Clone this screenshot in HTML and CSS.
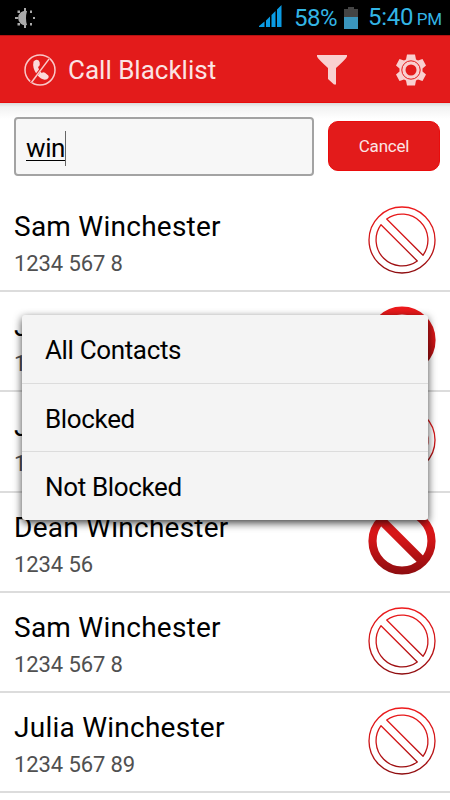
FILE: index.html
```html
<!DOCTYPE html>
<html lang="en">
<head>
  <meta charset="UTF-8" />
  <meta name="viewport" content="width=device-width, initial-scale=1.0" />
  <title>Call Blacklist</title>
  <link rel="stylesheet" href="styles.css">
</head>
<body>

  <!-- shared icons -->
  <svg class="defs" width="0" height="0">
    <defs>
      <linearGradient id="red" gradientUnits="userSpaceOnUse" x1="0" y1="-34" x2="0" y2="34">
        <stop offset="0" stop-color="#ee1a1c" />
        <stop offset="0.5" stop-color="#d01517" />
        <stop offset="1" stop-color="#8c0d10" />
      </linearGradient>
      <symbol id="allowed" viewBox="-35 -35 70 70">
        <g fill="none" stroke="url(#red)" stroke-width="1.3" stroke-linejoin="round">
          <circle r="33" />
          <path d="M-15.3 -21 A26 26 0 0 1 21 15.3 Z" />
          <path d="M-21 -15.3 A26 26 0 0 0 15.3 21 Z" />
        </g>
      </symbol>
      <symbol id="blocked" viewBox="-35 -35 70 70">
        <g fill="none" stroke="url(#red)">
          <circle r="29.5" stroke-width="8.2" />
          <path d="M-20 -20.1 L20 19.9" stroke-width="9" />
        </g>
      </symbol>
    </defs>
  </svg>

  <div class="status">
    <svg class="brightness" width="22" height="22" viewBox="0 0 22 22" fill="#aaa">
      <path d="M13 4 A7.2 7.2 0 1 0 13 18 Q11 11 13 4 Z" />
      <path d="M10 1h2v3h-2zM10 18h2v3h-2zM1 10h3v2H1zM3.5 3.5H6V6H3.5zM3.5 16H6v2.5H3.5zM16 3.5h2V6h-2zM16 16h2v2.500h-2zM19 10h2v2h-2z" />
    </svg>
    <svg class="signal" width="24" height="23" viewBox="0 0 24 23" fill="#0a9be3">
      <path d="M0 22V21L5.500 16.500V22ZM7 22V15.500L11 11.500V22ZM12.500 22V10L16.500 6V22ZM18 22V4.500L22.500 0V22Z" />
    </svg>
    <span class="percent">58%</span>
    <svg class="battery" width="14" height="22" viewBox="0 0 14 22">
      <path d="M0 2h4V0h6v2h4v8H0z" fill="#444" />
      <path d="M0 10h14v12H0z" fill="#3a95bd" />
    </svg>
    <span class="time">5:40 <small>PM</small></span>
  </div>

  <header>
    <svg class="logo" width="32" height="32" viewBox="0 0 32 32">
      <circle cx="16" cy="16" r="15" fill="none" stroke="#f9c9c9" stroke-width="1.500" />
      <path d="M9.500 7.500 Q12 4.800 14.700 6.500 Q16 8 15.800 10.500 Q15.700 12.300 14 13 Q14.800 16.300 17.700 19 Q19.300 17.700 21 18.800 L24.300 21.500 Q25.500 23.500 23 25.200 Q18.500 27.200 13 20.800 Q8 14 9.500 7.500 Z" fill="#fbdada" />
      <path d="M25 4.200 L7 28.200" stroke="#e31b1b" stroke-width="2.600" />
      <path d="M25.300 4.600 L7.400 28.500" stroke="#f9c9c9" stroke-width="1.500" />
    </svg>
    <h1>Call Blacklist</h1>
    <svg class="filter" width="30" height="30" viewBox="0 0 30 30">
      <path d="M0 0H30V1.500Q29 4 19 13V29.500H17L11 24V13Q1 4 0 1.500Z" fill="#f9d0d0" />
    </svg>
    <svg class="gear" width="32" height="32" viewBox="-16 -16 32 32">
      <path d="M-4 -15.500H4L5 -10.500L7 -9.500L11.500 -11L15 -4.500L11.500 -1.500V1.500L15 4.500L11.500 11L7 9.500L5 10.500L4 15.500H-4L-5 10.500L-7 9.500L-11.500 11L-15 4.500L-11.500 1.500V-1.500L-15 -4.500L-11.500 -11L-7 -9.500L-5 -10.500Z" fill="#f9d0d0" />
      <circle r="9.200" fill="none" stroke="#e31b1b" stroke-width="1" />
      <circle r="5.500" fill="#e31b1b" />
    </svg>
  </header>

  <div class="search">
    <div class="field"><span class="query">win</span></div>
    <button>Cancel</button>
  </div>

  <ul class="contacts">
    <li>
      <div><h2>Sam Winchester</h2><p>1234 567 8</p></div>
      <svg width="70" height="70"><use href="#allowed" /></svg>
    </li>
    <li>
      <div><h2>Julia Winchester</h2><p>1234 567 89</p></div>
      <svg width="70" height="70"><use href="#blocked" /></svg>
    </li>
    <li>
      <div><h2>Julia Winchester</h2><p>1234 567 89</p></div>
      <svg width="70" height="70"><use href="#allowed" /></svg>
    </li>
    <li>
      <div><h2>Dean Winchester</h2><p>1234 56</p></div>
      <svg width="70" height="70"><use href="#blocked" /></svg>
    </li>
    <li>
      <div><h2>Sam Winchester</h2><p>1234 567 8</p></div>
      <svg width="70" height="70"><use href="#allowed" /></svg>
    </li>
    <li>
      <div><h2>Julia Winchester</h2><p>1234 567 89</p></div>
      <svg width="70" height="70"><use href="#allowed" /></svg>
    </li>
  </ul>

  <div class="menu">
    <div class="option">All Contacts</div>
    <div class="option">Blocked</div>
    <div class="option">Not Blocked</div>
  </div>

</body>
</html>
```
FILE: styles.css
```css
* {
  box-sizing: border-box;
}

body {
  margin: 0;
  height: 800px;
  overflow: hidden;
  position: relative;
  font-family: Roboto, sans-serif;
  background: #fff;
  color: #000;
}

h1, h2, p, ul {
  margin: 0;
  padding: 0;
  font-weight: 400;
}

.defs {
  position: absolute;
}

.status {
  display: flex;
  align-items: center;
  height: 35px;
  padding: 0 10px 0 14px;
  background: #000;
  color: #33b5e5;
  font-size: 24px;
  line-height: 35px;
  white-space: nowrap;
}

.signal {
  margin-left: auto;
  margin-top: -2px;
}

.percent {
  width: 42px;
  margin-left: 11px;
  padding-top: 2px;
  letter-spacing: -0.5px;
}

.battery {
  margin: 0 10px 0 8px;
}

.time {
  width: 72px;
  padding-top: 2px;
  letter-spacing: -0.3px;
}

.time small {
  font-size: 17px;
  margin-left: -2px;
}

header {
  display: flex;
  align-items: center;
  height: 68px;
  padding: 1px 23px 0 24px;
  background: #e31b1b;
  border-top: 1px solid #b51212;
  border-bottom: 1px solid #e80c0c;
}

h1 {
  margin-left: 12px;
  padding-top: 1px;
  font-size: 26px;
  color: #fbe4e4;
}

.filter {
  margin-left: auto;
  margin-right: 48px;
}

.search {
  display: flex;
  align-items: center;
  height: 89px;
  padding: 0 10px 3px 14px;
  background: linear-gradient(#dadada, #f2f2f2 4px, #fff 16px);
}

.field {
  width: 300px;
  height: 59px;
  padding: 12px 10px;
  border: 2px solid #a3a3a3;
  border-radius: 4px;
  background: #f7f7f7;
}

.query {
  display: inline-block;
  height: 35px;
  border-right: 1px solid #666;
  font-size: 26px;
  line-height: 35px;
  letter-spacing: -0.4px;
  text-decoration: underline;
  text-decoration-thickness: 1px;
  text-underline-offset: 3px;
}

button {
  width: 112px;
  height: 50px;
  margin-left: auto;
  border: 1px solid #ea0c0c;
  border-radius: 10px;
  background: #e31b1b;
  color: #fbe4e4;
  font-family: inherit;
  font-size: 17px;
  letter-spacing: -0.2px;
}

.contacts {
  list-style: none;
}

.contacts li {
  display: flex;
  justify-content: space-between;
  height: 100.2px;
  padding: 13px 13px 0 14px;
  border-bottom: 2px solid #dcdcdc;
}

h2 {
  font-size: 28px;
  line-height: 44px;
  letter-spacing: 0.25px;
}

p {
  font-size: 22px;
  line-height: 30px;
  letter-spacing: -0.1px;
  color: #505050;
}

.menu {
  position: absolute;
  left: 22px;
  top: 315px;
  width: 406px;
  height: 205px;
  background: #f4f4f4;
  border-radius: 3px;
  box-shadow: 0 3px 9px rgba(0, 0, 0, 0.75);
}

.option {
  height: 68.500px;
  padding-left: 23px;
  font-size: 26px;
  line-height: 71px;
  letter-spacing: -0.35px;
  border-bottom: 1px solid #dcdcdc;
}

.option:last-child {
  border-bottom: none;
}
```
